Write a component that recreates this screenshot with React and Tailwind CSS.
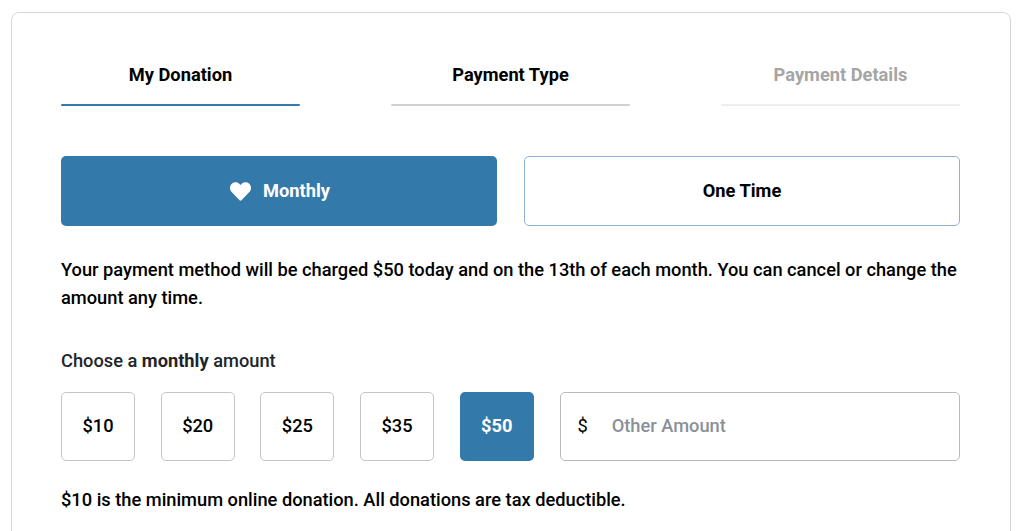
import { FaHeart } from 'react-icons/fa';

const steps = [
  { label: 'My Donation', text: 'text-black', bar: 'bg-[#337ab0]' },
  { label: 'Payment Type', text: 'text-black', bar: 'bg-[#d0d0d0]' },
  { label: 'Payment Details', text: 'text-[#a5a5a5]', bar: 'bg-[#eeeeee]' },
];

const amounts = ['$10', '$20', '$25', '$35', '$50'];

export default function App() {
  return (
    <div className="h-[531px] overflow-hidden bg-white px-[11px] pt-3 font-['Roboto',sans-serif] text-[18.25px] text-black">
      <div className="h-[600px] w-[1000px] rounded-lg border border-[#d5d7d9] pt-[50px] pr-[50px] pl-[49px]">
        <div className="flex justify-between">
          {steps.map((s) => (
            <div key={s.label} className="w-[239px]">
              <div className={`text-center leading-6 font-bold ${s.text}`}>{s.label}</div>
              <div className={`mt-[17px] h-0.5 rounded-full ${s.bar}`} />
            </div>
          ))}
        </div>

        <div className="mt-[50px] flex justify-between">
          <button className="flex h-[70px] w-[436px] items-center justify-center gap-3 rounded-[5px] bg-[#337aab] pl-0.5 font-bold text-white">
            <FaHeart size={21} />
            Monthly
          </button>
          <button className="h-[70px] w-[436px] rounded-[5px] border border-[#8fb2d2] bg-white font-bold">
            One Time
          </button>
        </div>

        <p className="mt-[30px] leading-[28px] font-medium">
          Your payment method will be charged $50 today and on the 13th of each month. You can cancel or change the amount any time.
        </p>

        <p className="mt-[35px] leading-7 font-medium text-[#212529]">
          Choose a <span className="font-bold">monthly</span> amount
        </p>

        <div className="mt-[17px] flex gap-[25.7px]">
          {amounts.map((a) =>
            a === '$50' ? (
              <button key={a} className="h-[69px] w-[74px] rounded-[5px] bg-[#337aab] pb-0.5 font-bold text-white">
                {a}
              </button>
            ) : (
              <button key={a} className="h-[69px] w-[74px] rounded-[5px] border border-[#c4c4c4] bg-white pb-0.5 font-medium">
                {a}
              </button>
            ),
          )}
          <div className="ml-px flex h-[69px] flex-1 items-center rounded-[5px] border border-[#b9b9b9] pb-0.5 pl-4">
            <span>$</span>
            <span className="ml-[24px] font-medium text-[#8a9099]">Other Amount</span>
          </div>
        </div>

        <p className="mt-[25px] leading-7 font-medium">
          $10 is the minimum online donation. All donations are tax deductible.
        </p>
      </div>
    </div>
  );
}
